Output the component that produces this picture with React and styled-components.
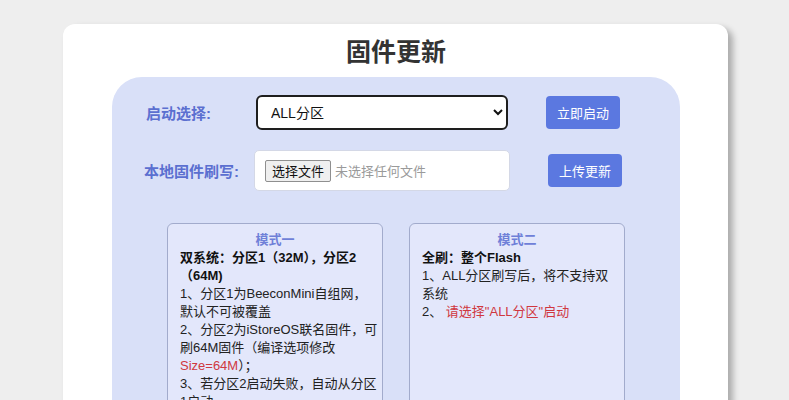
import React from 'react';
import styled, { createGlobalStyle } from 'styled-components';

const GlobalStyle = createGlobalStyle`
  html, body {
    margin: 0;
    padding: 0;
    background-color: #eeeeee;
    overflow: hidden;
  }
  body {
    font-family: "Liberation Sans", "Noto Sans CJK SC", sans-serif;
  }
`;

const Page = styled.div`
  padding: 24px 0 0 63px;
  height: 400px;
  box-sizing: border-box;
`;

const Card = styled.div`
  width: 665px;
  height: 420px;
  box-sizing: border-box;
  background-color: #ffffff;
  border-radius: 12px;
  box-shadow: 5px 4px 6px rgba(0, 0, 0, 0.28);
  padding: 8px 48px 0 49px;
`;

const Title = styled.h1`
  margin: 0;
  text-align: center;
  font-family: "Noto Sans CJK SC", sans-serif;
  font-size: 25px;
  line-height: 36px;
  font-weight: 700;
  color: #333333;
`;

const Panel = styled.div`
  margin-top: 9px;
  background-color: #d9e0f8;
  border-radius: 30px;
  padding: 18px 0 0 0;
  height: 400px;
`;

const Row = styled.div`
  display: flex;
  align-items: center;
  padding-left: ${p => p.$left}px;
  margin-bottom: ${p => p.$gap || 0}px;
`;

const Label = styled.label`
  width: ${p => p.$width}px;
  flex-shrink: 0;
  font-size: 15px;
  font-weight: 700;
  color: #5b6fd0;
`;

const Select = styled.select`
  width: 252px;
  height: 35px;
  border: 2px solid #1e1e1e;
  border-radius: 6px;
  background-color: #ffffff;
  padding: 0 8px 0 9px;
  font-family: inherit;
  font-size: 14px;
  color: #111111;
`;

const FileBox = styled.div`
  width: 256px;
  height: 41px;
  box-sizing: border-box;
  background-color: #ffffff;
  border: 1px solid #d4d8e6;
  border-radius: 5px;
  display: flex;
  align-items: center;
  padding-left: 10px;
  gap: 4px;
`;

const FileButton = styled.button`
  height: 22px;
  padding: 0 6px;
  font-family: inherit;
  font-size: 13px;
  color: #111111;
  background-color: #efefef;
  border: 1px solid #8f8f8f;
  border-radius: 2px;
`;

const FileHint = styled.span`
  font-size: 13px;
  color: #9a9a9a;
`;

const Action = styled.button`
  margin-left: ${p => p.$left}px;
  width: 74px;
  height: 33px;
  border: none;
  border-radius: 4px;
  background-color: #5b78e0;
  color: #ffffff;
  font-family: inherit;
  font-size: 13px;
`;

const Modes = styled.div`
  display: grid;
  grid-template-columns: 216px 216px;
  justify-content: center;
  column-gap: 26px;
  margin-top: 32px;
`;

const Mode = styled.div`
  box-sizing: border-box;
  background-color: #e3e7fb;
  border: 1px solid #a2abcc;
  border-radius: 6px;
  padding: 7px 4px 0 12px;
  height: 260px;
  font-size: 13px;
  line-height: 18px;
  color: #222222;
`;

const ModeTitle = styled.div`
  text-align: center;
  font-weight: 700;
  color: #6f80d8;
  margin-right: 8px;
`;

const Strong = styled.div`
  font-weight: 700;
  color: #111111;
  white-space: nowrap;
`;

const Line = styled.div`
  white-space: nowrap;
`;

const Red = styled.span`
  color: #d0383f;
`;

export default function App() {
  return (
    <>
      <GlobalStyle />
      <Page>
        <Card>
          <Title>固件更新</Title>
          <Panel>
            <Row $left={34} $gap={20}>
              <Label $width={110}>启动选择:</Label>
              <Select defaultValue="all">
                <option value="all">ALL分区</option>
                <option value="p1">分区1</option>
                <option value="p2">分区2</option>
              </Select>
              <Action $left={38}>立即启动</Action>
            </Row>
            <Row $left={32}>
              <Label $width={110}>本地固件刷写:</Label>
              <FileBox>
                <FileButton>选择文件</FileButton>
                <FileHint>未选择任何文件</FileHint>
              </FileBox>
              <Action $left={38}>上传更新</Action>
            </Row>
            <Modes>
              <Mode>
                <ModeTitle>模式一</ModeTitle>
                <Strong>双系统：分区1（32M），分区2<br />（64M)</Strong>
                <Line>1、分区1为BeeconMini自组网，<br />默认不可被覆盖</Line>
                <Line>
                  2、分区2为iStoreOS联名固件，可<br />刷64M固件（编译选项修改<br />
                  <Red>Size=64M</Red>）；
                </Line>
                <Line>3、若分区2启动失败，自动从分区<br />1启动</Line>
              </Mode>
              <Mode>
                <ModeTitle>模式二</ModeTitle>
                <Strong>全刷：整个Flash</Strong>
                <Line>1、ALL分区刷写后，将不支持双<br />系统</Line>
                <Line>
                  2、 <Red>请选择"ALL分区"启动</Red>
                </Line>
              </Mode>
            </Modes>
          </Panel>
        </Card>
      </Page>
    </>
  );
}
